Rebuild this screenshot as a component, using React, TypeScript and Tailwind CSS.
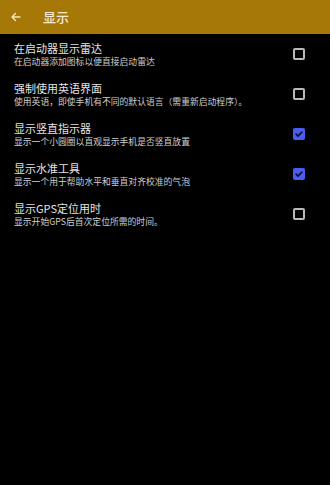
import { useState } from "react";

interface SettingItem {
  id: string;
  title: string;
  summary: string;
  checked: boolean;
}

const items: SettingItem[] = [
  { id: "radar", title: "在启动器显示雷达", summary: "在启动器添加图标以便直接启动雷达", checked: false },
  { id: "english", title: "强制使用英语界面", summary: "使用英语，即使手机有不同的默认语言（需重新启动程序）。", checked: false },
  { id: "vertical", title: "显示竖直指示器", summary: "显示一个小圆圈以直观显示手机是否竖直放置", checked: true },
  { id: "level", title: "显示水准工具", summary: "显示一个用于帮助水平和垂直对齐校准的气泡", checked: true },
  { id: "gps", title: "显示GPS定位用时", summary: "显示开始GPS后首次定位所需的时间。", checked: false },
];

function Box({ checked }: { checked: boolean }) {
  if (checked) {
    return (
      <span className="flex h-[12px] w-[12px] items-center justify-center rounded-[2px] bg-[#4b5cf0]">
        <svg className="h-[10px] w-[10px]" viewBox="0 0 24 24" fill="none" stroke="#0b1030" strokeWidth={4} strokeLinecap="round" strokeLinejoin="round">
          <path d="M5 12.5l4.5 4.5L19 7.5" />
        </svg>
      </span>
    );
  }
  return <span className="block h-[12px] w-[12px] rounded-[2px] border-2 border-[#b8b8b8]" />;
}

export default function App() {
  const [state, setState] = useState(items);

  return (
    <div className="flex h-[485px] w-[330px] flex-col bg-black font-['Noto_Sans_CJK_SC','Noto_Sans',sans-serif]">
      <div className="flex h-[34px] shrink-0 items-center bg-[#a67807] pl-[10px]">
        <svg className="h-[12px] w-[12px]" viewBox="0 0 24 24" fill="none" stroke="#f3e6c4" strokeWidth={2.6} strokeLinecap="round" strokeLinejoin="round">
          <path d="M20 12H5M11 5l-7 7 7 7" />
        </svg>
        <span className="ml-[21px] text-[13px] font-medium text-[#f6ead0]">显示</span>
      </div>
      {state.map((it, i) => (
        <button
          key={it.id}
          type="button"
          onClick={() =>
            setState((s) => s.map((x, j) => (j === i ? { ...x, checked: !x.checked } : x)))
          }
          className="flex h-[40px] w-full items-center pl-[14px] pr-[25px] text-left"
        >
          <div className="flex min-w-0 flex-1 flex-col">
            <span className="text-[11px] leading-[14px] text-[#e4e4e4]">{it.title}</span>
            <span className="truncate text-[8.8px] leading-[13px] text-[#cfcfcf]">{it.summary}</span>
          </div>
          <Box checked={it.checked} />
        </button>
      ))}
    </div>
  );
}
